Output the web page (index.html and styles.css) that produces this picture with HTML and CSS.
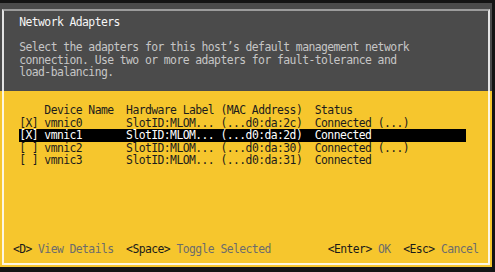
FILE: index.html
```html
<!DOCTYPE html>
<html lang="en">
<head>
  <meta charset="UTF-8">
  <title>Network Adapters</title>
  <link rel="stylesheet" href="styles.css">
</head>
<body>
  <div class="dialog">
    <div class="frame">
      <div class="head">
        <h1 class="title">Network Adapters</h1>
        <p class="desc">Select the adapters for this host’s default management network<br>connection. Use two or more adapters for fault-tolerance and<br>load-balancing.</p>
      </div>

      <!-- Adapterliste -->
      <div class="list">
        <div class="row row-head">
          <span></span><span>Device Name</span><span class="wide">Hardware Label (MAC Address)</span><span>Status</span>
        </div>
        <div class="row">
          <span>[X]</span><span>vmnic0</span><span>SlotID:MLOM...</span><span>(...d0:da:2c)</span><span>Connected (...)</span>
        </div>
        <div class="row selected">
          <span>[X]</span><span>vmnic1</span><span>SlotID:MLOM...</span><span>(...d0:da:2d)</span><span>Connected</span>
        </div>
        <div class="row">
          <span>[ ]</span><span>vmnic2</span><span>SlotID:MLOM...</span><span>(...d0:da:30)</span><span>Connected (...)</span>
        </div>
        <div class="row">
          <span>[ ]</span><span>vmnic3</span><span>SlotID:MLOM...</span><span>(...d0:da:31)</span><span>Connected</span>
        </div>
      </div>

      <div class="footer">
        <div><span class="key">&lt;D&gt;</span> View Details  <span class="key">&lt;Space&gt;</span> Toggle Selected</div>
        <div><span class="key">&lt;Enter&gt;</span> OK  <span class="key">&lt;Esc&gt;</span> Cancel</div>
      </div>
    </div>
  </div>
</body>
</html>
```

FILE: styles.css
```css
/* Konsole: feste Zeichenzelle 6.29 x 12.6 px */
* { box-sizing: border-box; }
body {
  margin: 0;
  background: #141414;
  font-family: "DejaVu Sans Mono", "Liberation Mono", monospace;
  font-size: 11.4px;
  letter-spacing: -0.57px;
  line-height: 12.6px;
}

.dialog {
  width: 492px;
  height: 264px;
  margin-top: 3px;
  padding: 6px 2px 2px 2px;
  background: linear-gradient(to bottom, #4b4b4b 88.5px, #f6c62d 88.5px);
}
.frame {
  height: 100%;
  display: flex;
  flex-direction: column;
  padding: 4.9px 0 7.7px 0;
  border: 2px solid rgba(255, 255, 255, 0.85);
  border-top-color: rgba(255, 255, 255, 0.45);
}

/* Kopfbereich */
.head { padding-left: 15.2px; }
.title {
  margin: 0;
  font-size: inherit;
  font-weight: normal;
  color: #f6f6f6;
}
.desc {
  margin: 12.6px 0 0 0;
  color: #c6c6c6;
}

/* Liste */
.list {
  margin: 25.2px 0 0 15.2px;
  color: #1c1c1c;
}
.row {
  display: grid;
  grid-template-columns: 25.16px 81.77px 94.35px 94.35px 151px;
  width: 446.6px;
  white-space: pre;
}
.row .wide { grid-column: span 2; }
.row.selected {
  background: #000;
  color: #fff;
}

/* Tastenleiste */
.footer {
  margin-top: auto;
  display: flex;
  justify-content: space-between;
  padding: 0 9.4px 0 8.9px;
  white-space: pre;
  color: #6c6c6c;
}
.key { color: #1a1a1a; }
```
